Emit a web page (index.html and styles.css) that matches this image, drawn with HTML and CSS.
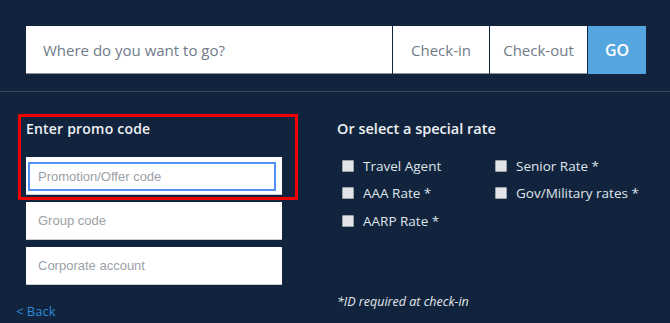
FILE: index.html
```html
<!DOCTYPE html>
<html lang="en">
<head>
  <meta charset="UTF-8">
  <title>Find a Hotel</title>
  <link rel="stylesheet" href="styles.css">
</head>
<body>

  <!-- Search bar -->
  <div class="search-bar">
    <div class="where">Where do you want to go?</div>
    <div class="date">Check-in</div>
    <div class="date">Check-out</div>
    <button class="go">GO</button>
  </div>

  <div class="options">
    <!-- Codes -->
    <div class="codes">
      <div class="highlight">
        <div class="title">Enter promo code</div>
        <div class="field focus">
          <input type="text" placeholder="Promotion/Offer code">
        </div>
      </div>
      <div class="field">
        <input type="text" placeholder="Group code">
      </div>
      <div class="field">
        <input type="text" placeholder="Corporate account">
      </div>
      <a class="back" href="#">&lt; Back</a>
    </div>

    <!-- Special rates -->
    <div class="rates">
      <div class="title">Or select a special rate</div>
      <div class="rate-grid">
        <label><span class="box"></span>Travel Agent</label>
        <label><span class="box"></span>Senior Rate *</label>
        <label><span class="box"></span>AAA Rate *</label>
        <label><span class="box"></span>Gov/Military rates *</label>
        <label><span class="box"></span>AARP Rate *</label>
      </div>
      <p class="note">*ID required at check-in</p>
    </div>
  </div>

</body>
</html>
```

FILE: styles.css
```css
body {
  margin: 0;
  background: #12243d;
  font-family: "Open Sans", Arial, sans-serif;
  color: #e4e9ee;
}
.search-bar {
  display: flex;
  gap: 1px;
  height: 48px;
  padding: 26px 0 17px 26px;
  border-bottom: 1px solid #33465d;
}
.search-bar > div {
  background: white;
  border-bottom: 1px solid #8a94a1;
  box-sizing: border-box;
  color: #6f7b89;
  font-size: 15px;
  display: flex;
  align-items: center;
}
.where {
  width: 366px;
  padding-left: 17px;
}
.date {
  justify-content: center;
  width: 96px;
}
.date + .date {
  width: 97px;
}
.go {
  width: 58px;
  border: none;
  background: #55a6df;
  color: white;
  font-family: inherit;
  font-size: 16px;
  font-weight: 600;
}
.options {
  display: flex;
  padding-top: 22px;
}
.codes {
  width: 256px;
  margin-left: 26px;
}
.highlight {
  margin: 0 -16px 2px -8px;
  padding: 3px 13px 2px 5px;
  border: 3px solid #f00000;
}
.title {
  font-size: 14px;
  font-weight: 600;
  line-height: 18px;
  letter-spacing: 0.2px;
  color: #edf1f5;
}
.highlight .title {
  margin-bottom: 19px;
}
.field {
  background: white;
  height: 38px;
  box-sizing: border-box;
  padding: 0 12px;
  margin-bottom: 7px;
  border-bottom: 1px solid #c9ced4;
}
.field input {
  border: none;
  outline: none;
  width: 100%;
  height: 37px;
  padding: 0;
  font-family: "Liberation Sans", Arial, sans-serif;
  font-size: 13px;
}
.field input::placeholder {
  color: #9a9fa6;
}
.field.focus {
  padding: 5px 6px 4px 2px;
  margin-bottom: 0;
}
.field.focus input {
  height: 29px;
  box-sizing: border-box;
  border: 2px solid #5391f5;
  padding-left: 8px;
}
.back {
  display: block;
  margin: 17px 0 0 -10px;
  color: #2d8cdb;
  font-size: 13px;
  text-decoration: none;
}
.rates {
  margin-left: 55px;
  padding-top: 6px;
}
.rates .title {
  font-size: 14.5px;
  letter-spacing: 0;
}
.rate-grid {
  display: grid;
  grid-template-columns: 153px auto;
  row-gap: 8px;
  margin: 19px 0 0 5px;
}
.rate-grid label {
  display: flex;
  align-items: center;
  font-size: 13.5px;
  font-weight: 500;
  line-height: 18px;
  color: #dfe5eb;
}
.rate-grid label:nth-child(n+3) {
  margin-top: 1px;
}
.rate-grid label:nth-child(n+5) {
  margin-top: 2px;
}
.box {
  width: 10px;
  height: 10px;
  margin-right: 9px;
  background: #e2e4e7;
  border: 1px solid #9da3aa;
  border-radius: 1px;
}
.note {
  margin: 63px 0 0;
  font-size: 12.5px;
  font-style: italic;
  color: #e4e9ee;
}
```
